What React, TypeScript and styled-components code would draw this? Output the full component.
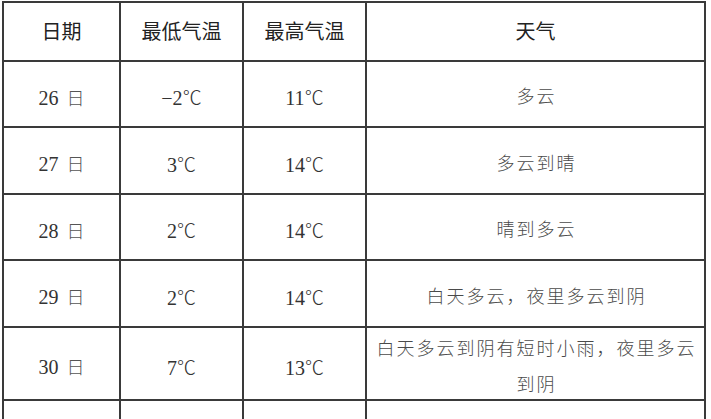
import React from "react";
import styled, { createGlobalStyle } from "styled-components";

const Global = createGlobalStyle`
  html, body { margin: 0; padding: 0; background: #fff; }
  body { overflow: hidden; }
`;

const Page = styled.div`
  width: 711px;
  height: 419px;
  overflow: hidden;
  background: #fff;
  padding: 1px 0 0 2px;
  box-sizing: border-box;
`;

const Grid = styled.div`
  display: grid;
  grid-template-columns: 117px 123px 123px 339px;
  grid-template-rows: 59px 66px 67px 66px 67px 73px 66px;
  border-left: 2px solid #3a3a3a;
  border-top: 2px solid #3a3a3a;
  width: max-content;
`;

const Cell = styled.div<{ $head?: boolean }>`
  box-sizing: border-box;
  border-right: 2px solid #3a3a3a;
  border-bottom: 2px solid #3a3a3a;
  display: flex;
  align-items: center;
  justify-content: center;
  text-align: center;
  padding: ${(p) => (p.$head ? "0 0 2px" : "0")};
  font-family: "Noto Sans CJK SC", sans-serif;
  font-size: 20px;
  color: #222;
`;

const Num = styled.span`
  font-family: "Liberation Serif", "Noto Sans CJK SC", serif;
  font-size: 20px;
  color: #333;
  padding-top: 5px;
`;

const Day = styled.span`
  font-family: "Noto Sans CJK SC", sans-serif;
  font-weight: 300;
  font-size: 18px;
  color: #555;
  margin-left: 8px;
`;

const Deg = styled.span`
  font-family: "Noto Sans CJK SC", serif;
  font-weight: 300;
  font-size: 19px;
  color: #333;
`;

const Weather = styled.span`
  font-family: "Noto Sans CJK SC", sans-serif;
  font-weight: 300;
  font-size: 18px;
  letter-spacing: 2px;
  line-height: 36px;
  color: #4a4a4a;
  padding: 0 4px 0 6px;
  margin-top: 2px;
`;

const rows = [
  { d: "26", lo: "−2", hi: "11", w: "多云" },
  { d: "27", lo: "3", hi: "14", w: "多云到晴" },
  { d: "28", lo: "2", hi: "14", w: "晴到多云" },
  { d: "29", lo: "2", hi: "14", w: "白天多云，夜里多云到阴" },
  { d: "30", lo: "7", hi: "13", w: "白天多云到阴有短时小雨，夜里多云到阴" },
];

const Temp = ({ v }: { v: string }) => (
  <Num>
    {v}
    <Deg>℃</Deg>
  </Num>
);

export default function App() {
  return (
    <Page>
      <Global />
      <Grid>
        <Cell $head>日期</Cell>
        <Cell $head>最低气温</Cell>
        <Cell $head>最高气温</Cell>
        <Cell $head>天气</Cell>
        {rows.map((r) => (
          <React.Fragment key={r.d}>
            <Cell>
              <Num>
                {r.d}
                <Day>日</Day>
              </Num>
            </Cell>
            <Cell>
              <Temp v={r.lo} />
            </Cell>
            <Cell>
              <Temp v={r.hi} />
            </Cell>
            <Cell>
              <Weather>{r.w}</Weather>
            </Cell>
          </React.Fragment>
        ))}
        <Cell />
        <Cell />
        <Cell />
        <Cell />
      </Grid>
    </Page>
  );
}
